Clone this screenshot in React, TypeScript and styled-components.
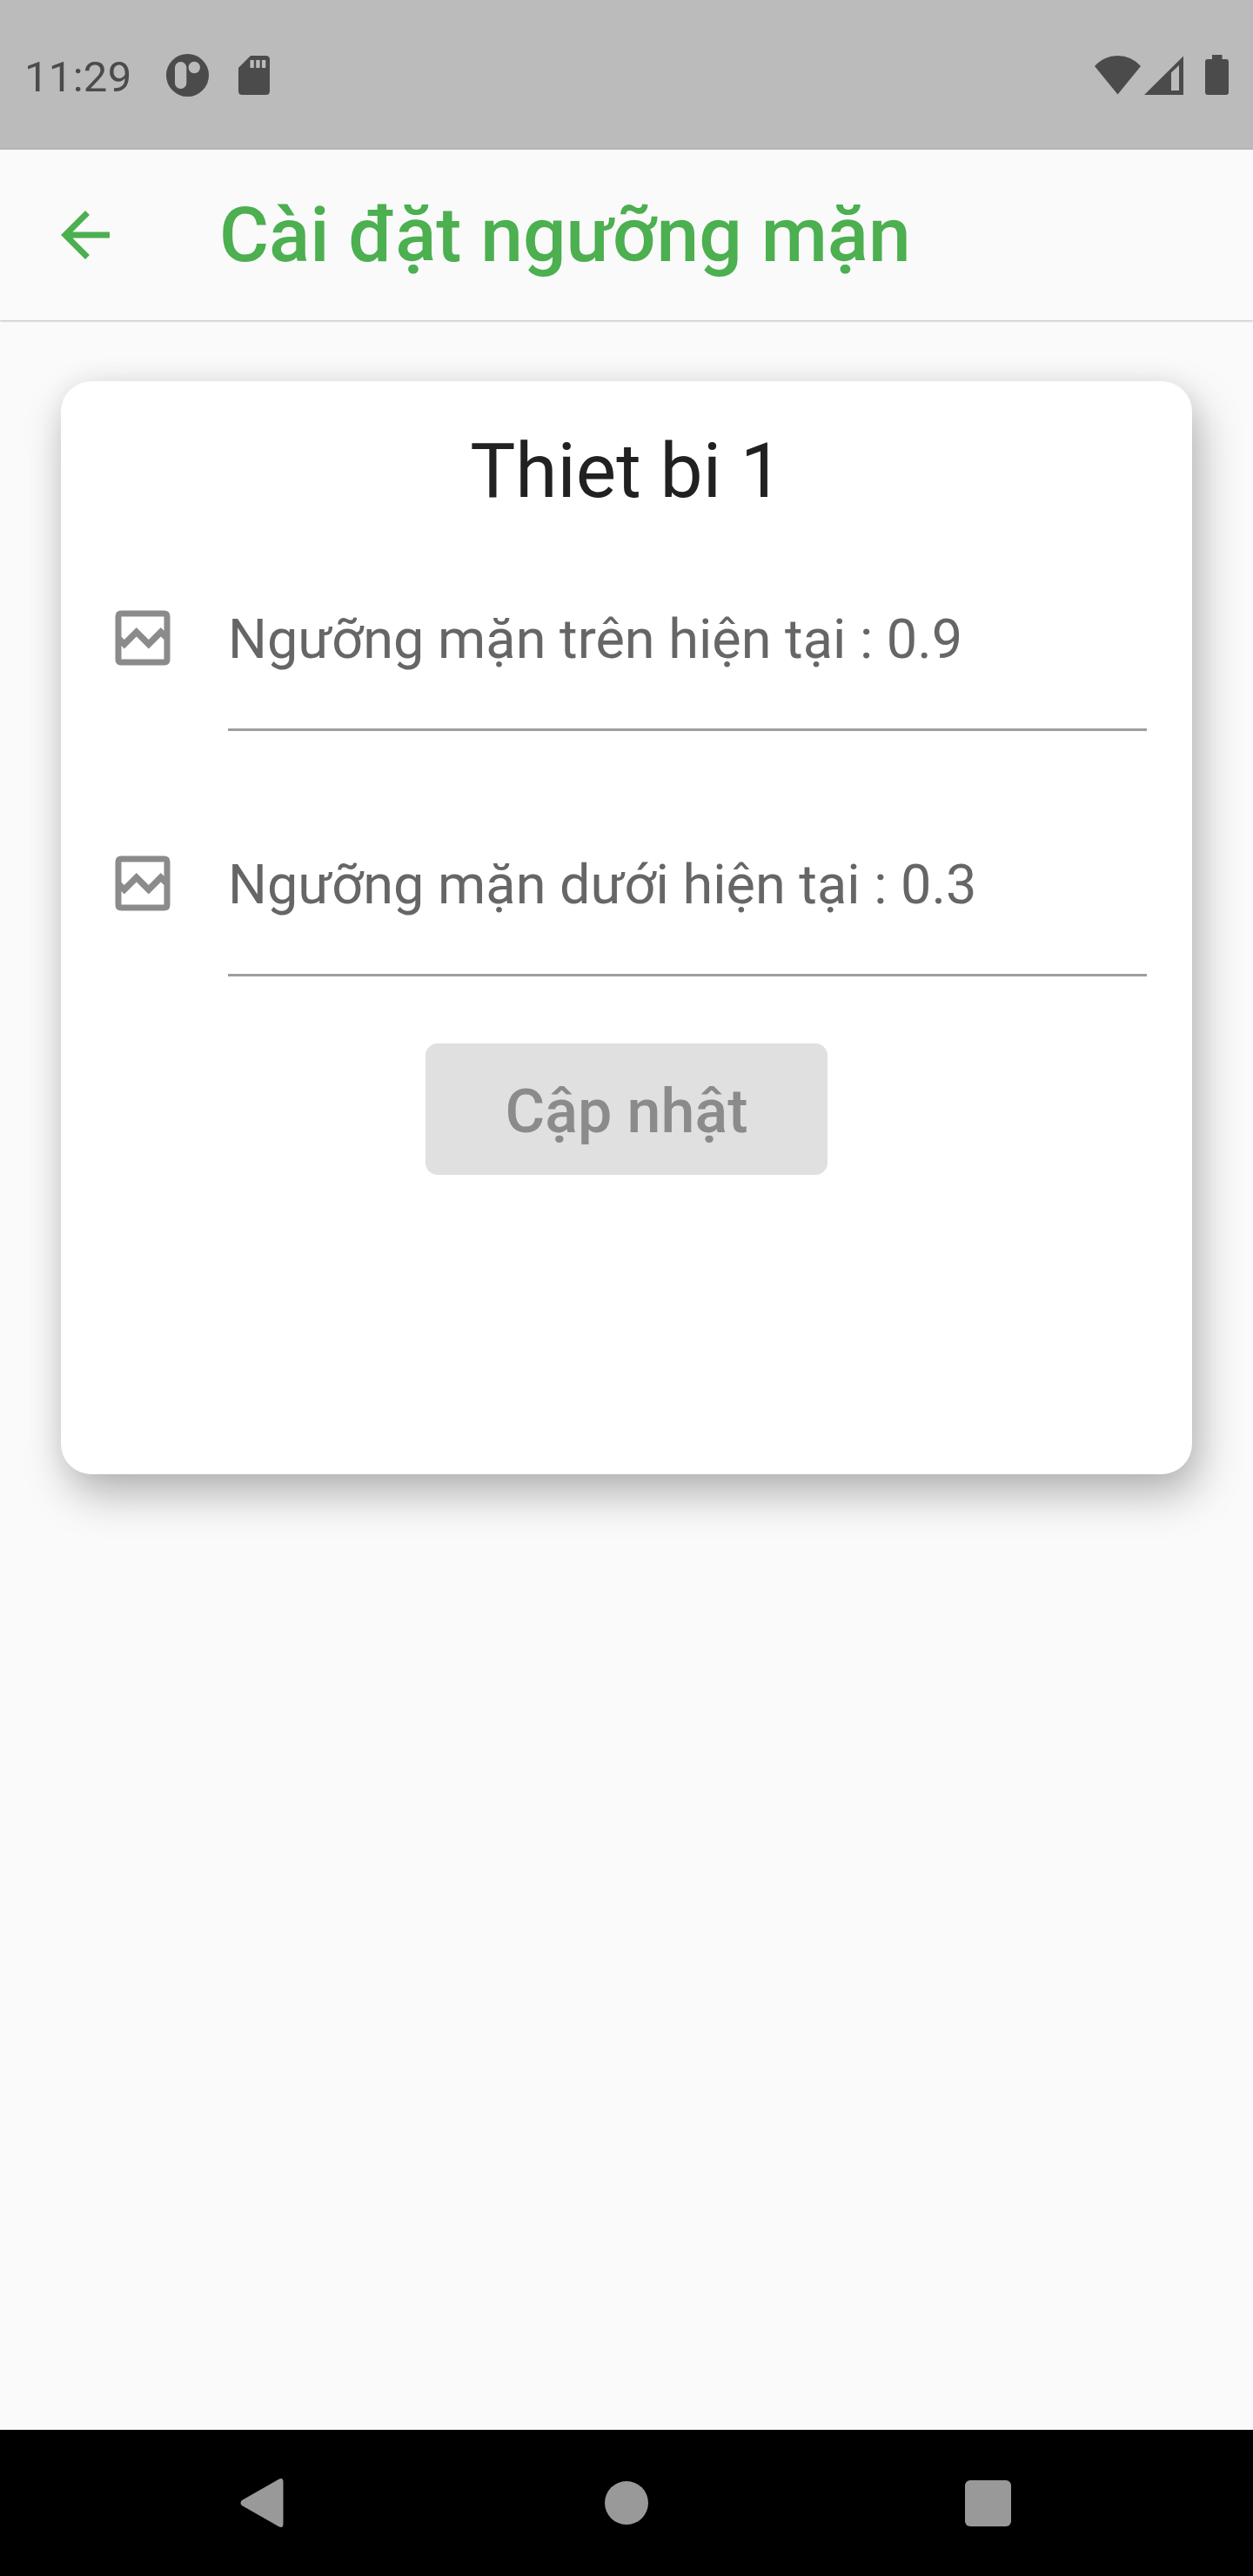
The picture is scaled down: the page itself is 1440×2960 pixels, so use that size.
import React from "react";
import styled, { createGlobalStyle } from "styled-components";

const GlobalStyle = createGlobalStyle`
  html, body { margin: 0; padding: 0; background: #fafafa; }
  body { font-family: Roboto, "Noto Sans", sans-serif; }
  * { box-sizing: border-box; }
  svg { display: block; flex: none; }
`;

const Screen = styled.div`
  width: 1440px;
  height: 2960px;
  display: flex;
  flex-direction: column;
  background: #fafafa;
  overflow: hidden;
`;

const StatusBar = styled.header`
  height: 172px;
  flex: none;
  display: flex;
  align-items: center;
  justify-content: space-between;
  padding: 0 28px;
  background: #bbbbbb;
  color: #4b4b4b;
`;

const StatusGroup = styled.div<{ $gap: number }>`
  display: flex;
  align-items: center;
  gap: ${(p) => p.$gap}px;
`;

const Clock = styled.span`
  width: 129px;
  font-size: 49px;
  line-height: 58px;
  letter-spacing: 0.3px;
  padding-top: 5px;
  white-space: nowrap;
`;

const AppBar = styled.div`
  height: 196px;
  flex: none;
  display: flex;
  align-items: center;
  gap: 112px;
  padding: 0 56px;
  color: #4caf50;
  box-shadow: 0 1px 2px rgba(0, 0, 0, 0.22), 0 0 3px rgba(0, 0, 0, 0.1);
`;

const BackButton = styled.button`
  border: 0;
  padding: 0;
  background: none;
  color: inherit;
`;

const Title = styled.h1`
  margin: 0;
  font-size: 87.5px;
  line-height: 102px;
  font-weight: 500;
  white-space: nowrap;
`;

const Content = styled.main`
  flex: 1;
  padding: 70px;
`;

const Card = styled.section`
  height: 1256px;
  display: flex;
  flex-direction: column;
  align-items: center;
  padding: 52px 52px 0;
  border-radius: 35px;
  background: #ffffff;
  box-shadow: 8px 23px 50px rgba(0, 0, 0, 0.28), 0 0 30px rgba(0, 0, 0, 0.06);
`;

const DeviceName = styled.h2`
  margin: 0;
  font-size: 87.5px;
  line-height: 102px;
  font-weight: 400;
  color: #212121;
`;

const Field = styled.label<{ $top: number }>`
  width: 100%;
  height: 167px;
  margin-top: ${(p) => p.$top}px;
  display: flex;
  gap: 56px;
  color: #8b8b8b;
`;

const FieldIcon = styled.span`
  padding-top: 18px;
`;

const FieldLine = styled.span`
  flex: 1;
  padding-top: 25px;
  border-bottom: 3px solid #9e9e9e;
  color: #666666;
  font-size: 63px;
  line-height: 74px;
  white-space: nowrap;
`;

const UpdateButton = styled.button`
  width: 462px;
  height: 151px;
  flex: none;
  margin-top: 77px;
  padding: 5px 0 0;
  border: 0;
  border-radius: 14px;
  background: #e0e0e0;
  color: #8b8b8b;
  font-family: inherit;
  font-size: 70px;
  line-height: 82px;
  font-weight: 500;
`;

const NavBar = styled.nav`
  height: 168px;
  flex: none;
  display: flex;
  align-items: center;
  padding-left: 276px;
  background: #000000;
  color: #999999;
`;

const NavItem = styled.span<{ $before?: number }>`
  margin-left: ${(p) => p.$before ?? 0}px;
`;

const NotificationIcon = () => (
  <svg width="49" height="49" viewBox="0 0 49 49">
    <circle cx="24.5" cy="24.5" r="24.5" fill="currentColor" />
    <rect x="10" y="9" width="13.3" height="31" rx="6.6" fill="#bbbbbb" />
    <circle cx="32.3" cy="15.5" r="6.7" fill="#bbbbbb" />
  </svg>
);

const SdCardIcon = () => (
  <svg width="36" height="45" viewBox="0 0 36 45">
    <path
      fill="currentColor"
      d="M14 0H31.5Q36 0 36 4.5V40.5Q36 45 31.5 45H4.5Q0 45 0 40.5V14Z"
    />
    <path fill="#bbbbbb" d="M13.5 5h4.3v9h-4.3zM20.3 5h4.3v9h-4.3zM27 5h4.3v9h-4.3z" />
  </svg>
);

const WifiIcon = () => (
  <svg width="53" height="45" viewBox="0 0 53 45">
    <path fill="currentColor" d="M0 12Q11 0 26.5 0T53 12L26.5 44.5Z" />
  </svg>
);

const SignalIcon = () => (
  <svg width="45" height="45" viewBox="0 0 45 45">
    <path
      fill="currentColor"
      fillRule="evenodd"
      d="M0 45L45 0.5V45ZM31 19.5V40H40V11Z"
    />
  </svg>
);

const BatteryIcon = () => (
  <svg width="27" height="46" viewBox="0 0 27 46">
    <path
      fill="currentColor"
      d="M8 0H19.5V5H24Q27 5 27 8V43Q27 46 24 46H3Q0 46 0 43V8Q0 5 3 5H8Z"
    />
  </svg>
);

const ArrowBackIcon = () => (
  <svg width="84" height="84" viewBox="0 0 24 24">
    <path
      fill="currentColor"
      d="M20 11H7.83l5.59-5.59L12 4l-8 8 8 8 1.41-1.41L7.83 13H20z"
    />
  </svg>
);

const ThresholdIcon = () => (
  <svg width="84" height="84" viewBox="0 0 24 24">
    <path
      fill="currentColor"
      fillRule="evenodd"
      d="M5 3H19Q21 3 21 5V19Q21 21 19 21H5Q3 21 3 19V5Q3 3 5 3ZM5 5V11.62L5.95 12.59L9.95 8.59L13.95 12.59L17.95 8.59L19 9.62V5ZM5 14.6V19H19V12.6L17.95 11.57L13.95 15.57L9.95 11.57L5.95 15.57Z"
    />
  </svg>
);

const fields = [
  { label: "Ngưỡng mặn trên hiện tại : 0.9", top: 81 },
  { label: "Ngưỡng mặn dưới hiện tại : 0.3", top: 115 },
];

export default function App() {
  return (
    <>
      <GlobalStyle />
      <Screen>
        <StatusBar>
          <StatusGroup $gap={34}>
            <Clock>11:29</Clock>
            <NotificationIcon />
            <SdCardIcon />
          </StatusGroup>
          <StatusGroup $gap={25}>
            <StatusGroup $gap={4}>
              <WifiIcon />
              <SignalIcon />
            </StatusGroup>
            <BatteryIcon />
          </StatusGroup>
        </StatusBar>
        <AppBar>
          <BackButton aria-label="Back">
            <ArrowBackIcon />
          </BackButton>
          <Title>Cài đặt ngưỡng mặn</Title>
        </AppBar>
        <Content>
          <Card>
            <DeviceName>Thiet bi 1</DeviceName>
            {fields.map((f) => (
              <Field key={f.label} $top={f.top}>
                <FieldIcon>
                  <ThresholdIcon />
                </FieldIcon>
                <FieldLine>{f.label}</FieldLine>
              </Field>
            ))}
            <UpdateButton>Cập nhật</UpdateButton>
          </Card>
        </Content>
        <NavBar>
          <NavItem>
            <svg width="50" height="56" viewBox="0 0 50 56">
              <path
                fill="currentColor"
                d="M2 25L44.5 0.8Q49.5 -1.5 49.5 4V52Q49.5 57.5 44.5 55.2L2 31Q-1 28 2 25Z"
              />
            </svg>
          </NavItem>
          <NavItem $before={369}>
            <svg width="50" height="50" viewBox="0 0 50 50">
              <circle cx="25" cy="25" r="25" fill="currentColor" />
            </svg>
          </NavItem>
          <NavItem $before={364}>
            <svg width="53" height="53" viewBox="0 0 53 53">
              <rect width="53" height="53" rx="6" fill="currentColor" />
            </svg>
          </NavItem>
        </NavBar>
      </Screen>
    </>
  );
}
